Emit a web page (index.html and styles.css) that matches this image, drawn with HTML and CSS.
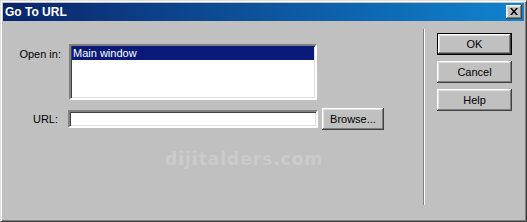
FILE: index.html
```html
<!DOCTYPE html>
<html>
<head>
<meta charset="utf-8">
<link rel="stylesheet" href="styles.css">
</head>
<body>
<div class="window">
  <div class="titlebar">
    <span class="title">Go To URL</span>
    <div class="close"><svg width="8" height="7" viewBox="0 0 8 7"><path d="M0 0h2l2 2.5L6 0h2L5 3.5 8 7H6L4 4.5 2 7H0l3-3.5z" fill="#000"/></svg></div>
  </div>
  <div class="client">
    <div class="main">
      <div class="form">
        <div class="lbl lbl-open">Open in:</div>
        <div class="listbox"><div class="item selected">Main window</div></div>
        <div class="lbl lbl-url">URL:</div>
        <div class="urlrow"><div class="textbox"></div><div class="btn browse">Browse...</div></div>
      </div>
      <div class="watermark">dijitalders.com</div>
    </div>
    <div class="sep"></div>
    <div class="buttons">
      <div class="btn default">OK</div>
      <div class="btn">Cancel</div>
      <div class="btn">Help</div>
    </div>
  </div>
</div>
</body>
</html>
```

FILE: styles.css
```css
* { box-sizing: border-box; }
html, body { margin: 0; padding: 0; background: #c0c0c0; }
body { font-family: "Liberation Sans", Arial, sans-serif; font-size: 11px; color: #000; }

.window {
  width: 527px;
  height: 222px;
  background: #c0c0c0;
  border: 1px solid;
  border-color: #dfdfdf #404040 #404040 #dfdfdf;
  box-shadow: inset 1px 1px #fff, inset -1px -1px #808080;
  padding: 2px;
  display: flex;
  flex-direction: column;
}

.titlebar {
  height: 18px;
  background: linear-gradient(to right, #0a246a, #1084d0);
  display: flex;
  align-items: center;
  justify-content: space-between;
  padding: 0 2px 0 2px;
}
.title {
  color: #fff;
  font-weight: bold;
  font-size: 12px;
  line-height: 14px;
}
.close {
  width: 16px;
  height: 14px;
  background: #c0c0c0;
  box-shadow: inset -1px -1px #404040, inset 1px 1px #fff, inset -2px -2px #808080, inset 2px 2px #dfdfdf;
  display: flex;
  align-items: center;
  justify-content: center;
  padding: 0 1px 1px 0;
}
.close svg { display: block; }

.client {
  flex: 1;
  display: flex;
}

.main {
  width: 420px;
  padding-top: 23px;
}

.form {
  display: grid;
  grid-template-columns: 65px auto;
  row-gap: 8px;
}

.lbl { text-align: right; line-height: 13px; }
.lbl-open { padding-right: 7px; padding-top: 4px; }
.lbl-url { padding-right: 10px; align-self: center; }

.listbox {
  margin-left: 1px;
  width: 248px;
  height: 56px;
  background: #fff;
  border: 2px solid;
  border-color: #808080 #fff #fff #808080;
  box-shadow: inset 1px 1px #404040, inset -1px -1px #dfdfdf;
  padding: 0 1px 0 1px;
}
.item {
  height: 14px;
  line-height: 14px;
  padding-left: 1px;
}
.selected { background: #0a1a7a; color: #fff; }

.urlrow {
  display: flex;
  align-items: center;
  gap: 4px;
}
.textbox {
  width: 250px;
  height: 18px;
  background: #fff;
  border: 2px solid;
  border-color: #808080 #fff #fff #808080;
  box-shadow: inset 1px 1px #404040, inset -1px -1px #dfdfdf;
}

.btn {
  background: #c0c0c0;
  box-shadow: inset -1px -1px #404040, inset 1px 1px #fff, inset -2px -2px #808080, inset 2px 2px #dfdfdf;
  display: flex;
  align-items: center;
  justify-content: center;
  width: 75px;
  height: 22px;
}
.browse { width: 62px; height: 22px; }
.default {
  border: 1px solid #000;
}

.watermark {
  margin-top: 20px;
  margin-left: 162px;
  font-family: "DejaVu Sans", sans-serif;
  font-weight: bold;
  font-size: 17px;
  line-height: 18px;
  letter-spacing: 1px;
  color: #cbcbcb;
}

.sep {
  width: 2px;
  margin-top: 8px;
  height: 176px;
  border-left: 1px solid #808080;
  border-right: 1px solid #fff;
}

.buttons {
  margin-left: 12px;
  margin-top: 12px;
  display: flex;
  flex-direction: column;
  gap: 6px;
}
```
